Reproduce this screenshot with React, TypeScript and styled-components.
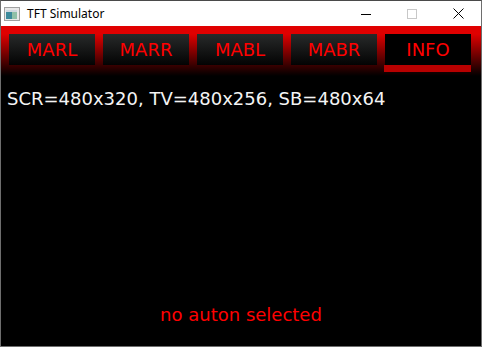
import styled, {createGlobalStyle} from 'styled-components';

const GlobalStyle = createGlobalStyle`
  html, body {
    margin: 0;
    padding: 0;
    background: #ffffff;
  }
`;

const StyledWindow = styled.div`
  width: 480px;
  border: 1px solid #6e6e6e;
  border-top-color: #4a4a4a;
  display: flex;
  flex-direction: column;
`;

const StyledTitleBar = styled.div`
  height: 25px;
  background: #ffffff;
  display: flex;
  align-items: center;
  font-family: "Noto Sans", "Open Sans", sans-serif;
  font-size: 12px;
  color: #000;
`;

const StyledTitleIcon = styled.svg`
  margin-left: 3px;
  margin-right: 7px;
  flex-shrink: 0;
`;

const StyledTitleText = styled.div`
  flex-grow: 1;
`;

const StyledCaptionButton = styled.div`
  width: 46px;
  height: 25px;
  display: flex;
  align-items: center;
  justify-content: center;
`;

const StyledScreen = styled.div`
  width: 480px;
  height: 320px;
  background: #000;
  display: flex;
  flex-direction: column;
  font-family: "DejaVu Sans", sans-serif;
  font-size: 18px;
  -webkit-font-smoothing: none;
`;

const StyledTabBar = styled.div`
  height: 64px;
  box-sizing: border-box;
  padding: 8px 8px 0 8px;
  display: flex;
  gap: 8px;
  background: linear-gradient(to bottom, #e00000 0px, #e00000 8px, #000 50px);
`;

const StyledTab = styled.div`
  width: 86px;
  display: flex;
  flex-direction: column;
`;

const StyledTabButton = styled.div<{ $active: boolean }>`
  height: 31px;
  display: flex;
  align-items: center;
  justify-content: center;
  color: #ff0000;
  background: ${ (p) => p.$active ? '#000' : 'linear-gradient(to bottom, #282a2a, #030303)' };
`;

const StyledIndicator = styled.div`
  height: 7px;
  margin-left: -1px;
  background: #b80000;
`;

const StyledContent = styled.div`
  flex-grow: 1;
  padding-left: 6px;
  color: #f4f4f4;
  line-height: 18px;
`;

const StyledStatusBar = styled.div`
  height: 64px;
  display: flex;
  align-items: center;
  justify-content: center;
  color: #ff0000;
`;

const tabs = ['MARL', 'MARR', 'MABL', 'MABR', 'INFO'];

function App() {
  const activeTab = 'INFO';

  return (
    <>
      <GlobalStyle />
      <StyledWindow>
        <StyledTitleBar>
          <StyledTitleIcon width="16" height="14" viewBox="0 0 16 14">
            <rect x="0.5" y="0.5" width="15" height="13" fill="#e8e8e8" stroke="#a0a0a0" />
            <rect x="2" y="3" width="6" height="9" fill="#3c8a9c" />
            <rect x="8" y="3" width="5" height="9" fill="#8fc0a8" />
            <rect x="2" y="3" width="11" height="2" fill="#d0d8e0" />
          </StyledTitleIcon>
          <StyledTitleText>TFT Simulator</StyledTitleText>
          <StyledCaptionButton>
            <svg width="10" height="10" viewBox="0 0 10 10">
              <line x1="0" y1="5.5" x2="10" y2="5.5" stroke="#000" strokeWidth="1" />
            </svg>
          </StyledCaptionButton>
          <StyledCaptionButton>
            <svg width="10" height="10" viewBox="0 0 10 10">
              <rect x="0.5" y="0.5" width="9" height="9" fill="none" stroke="#c8c8c8" strokeWidth="1" />
            </svg>
          </StyledCaptionButton>
          <StyledCaptionButton>
            <svg width="11" height="11" viewBox="0 0 11 11">
              <path d="M0.5 0.5 L10.5 10.5 M10.5 0.5 L0.5 10.5" stroke="#000" strokeWidth="1" />
            </svg>
          </StyledCaptionButton>
        </StyledTitleBar>
        <StyledScreen>
          <StyledTabBar>
            { tabs.map((tab) => (
              <StyledTab key={ tab }>
                <StyledTabButton $active={ tab === activeTab }>{ tab }</StyledTabButton>
                { tab === activeTab && <StyledIndicator /> }
              </StyledTab>
            )) }
          </StyledTabBar>
          <StyledContent>SCR=480x320, TV=480x256, SB=480x64</StyledContent>
          <StyledStatusBar>no auton selected</StyledStatusBar>
        </StyledScreen>
      </StyledWindow>
    </>
  );
}

export default App;
